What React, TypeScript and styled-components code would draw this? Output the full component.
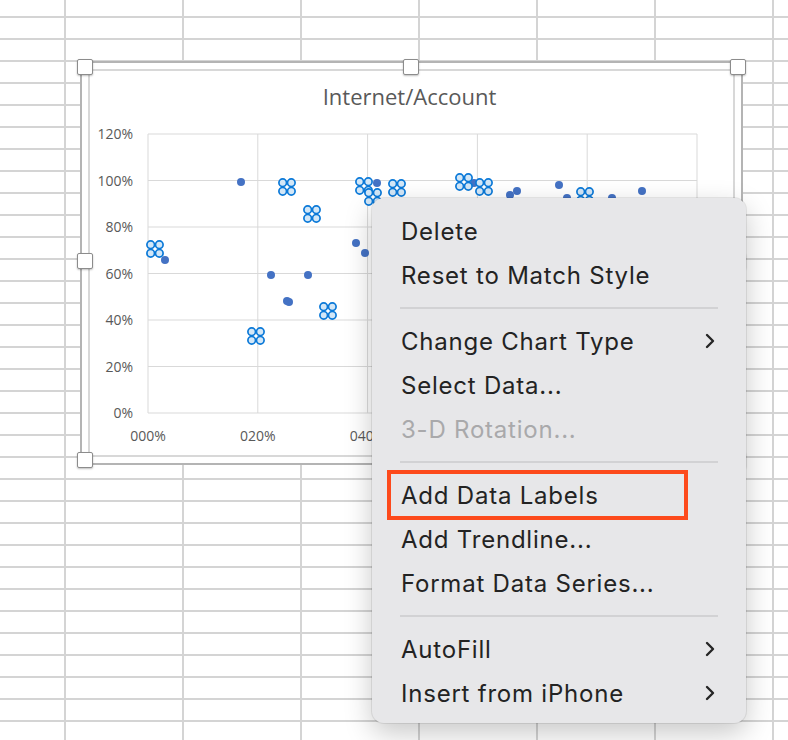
import React from "react";
import styled, { createGlobalStyle, css } from "styled-components";

const GlobalStyle = createGlobalStyle`
  html, body {
    margin: 0;
    padding: 0;
  }
  body {
    background: #ffffff;
    font-family: "Open Sans", "Liberation Sans", sans-serif;
  }
`;

// spreadsheet cells: 118px columns, 22px rows
const Sheet = styled.div`
  position: relative;
  width: 788px;
  height: 740px;
  overflow: hidden;
  background-color: #ffffff;
  background-image:
    linear-gradient(to right, #d4d4d4 2px, transparent 2px),
    linear-gradient(to bottom, #d4d4d4 2px, transparent 2px);
  background-size: 118px 100%, 100% 22px;
  background-position: 64px 0, 0 16px;
`;

const ChartFrame = styled.div`
  position: absolute;
  left: 80px;
  top: 61px;
  width: 663px;
  height: 404px;
  box-sizing: border-box;
  border: 2px solid #b4b4b4;
  padding: 6px;
  background: #ffffff;
`;

const ChartArea = styled.div`
  box-sizing: border-box;
  height: 100%;
  border: 2px solid #d8d8d8;
  display: flex;
  flex-direction: column;
`;

const ChartTitle = styled.div`
  height: 50px;
  display: flex;
  align-items: center;
  justify-content: center;
  font-family: "Open Sans", sans-serif;
  font-size: 22px;
  color: #595959;
  padding-right: 4px;
`;

const Plot = styled.svg`
  display: block;
  flex: 1;
`;

type Edge = "start" | "mid" | "end";

const Handle = styled.div<{ $x: Edge; $y: Edge }>`
  position: absolute;
  width: 14px;
  height: 14px;
  background: #ffffff;
  border: 1px solid #8c8c8c;
  border-radius: 2px;
  box-shadow: 0 1px 2px rgba(0, 0, 0, 0.25);
  ${({ $x }) =>
    $x === "start"
      ? css`left: -5px;`
      : $x === "mid"
      ? css`left: 321px;`
      : css`right: -5px;`}
  ${({ $y }) =>
    $y === "start"
      ? css`top: -4px;`
      : $y === "mid"
      ? css`top: 190px;`
      : css`bottom: -5px;`}
`;

const Menu = styled.div`
  position: absolute;
  left: 372px;
  top: 198px;
  width: 374px;
  box-sizing: border-box;
  padding: 11px 0 8px;
  background: #e7e7e9;
  border-radius: 12px;
  box-shadow: 0 0 0 1px rgba(0, 0, 0, 0.08), 0 10px 28px rgba(0, 0, 0, 0.22);
  font-family: Inter, "Noto Sans", sans-serif;
`;

const MenuItem = styled.div<{ $disabled?: boolean; $marked?: boolean }>`
  position: relative;
  height: 44px;
  display: flex;
  align-items: center;
  justify-content: space-between;
  padding: 0 30px 0 29px;
  font-size: 24px;
  letter-spacing: 0.78px;
  color: ${({ $disabled }) => ($disabled ? "#a9a9ab" : "#232323")};

  ${({ $marked }) =>
    $marked &&
    css`
      &::after {
        content: "";
        position: absolute;
        left: 15px;
        right: 58px;
        top: -3px;
        bottom: -3px;
        border: 4px solid #fd4a1c;
      }
    `}
`;

const Separator = styled.div`
  height: 22px;
  display: flex;
  align-items: center;
  padding: 0 28px;

  &::after {
    content: "";
    flex: 1;
    height: 2px;
    background: #d2d2d4;
  }
`;

const Chevron = () => (
  <svg width="12" height="16" viewBox="0 0 12 16">
    <path
      d="M3 2 L9 8 L3 14"
      fill="none"
      stroke="#262626"
      strokeWidth="2.4"
      strokeLinecap="round"
      strokeLinejoin="round"
    />
  </svg>
);

type Entry =
  | { kind: "item"; label: string; sub?: boolean; disabled?: boolean; marked?: boolean }
  | { kind: "sep" };

const menuEntries: Entry[] = [
  { kind: "item", label: "Delete" },
  { kind: "item", label: "Reset to Match Style" },
  { kind: "sep" },
  { kind: "item", label: "Change Chart Type", sub: true },
  { kind: "item", label: "Select Data..." },
  { kind: "item", label: "3-D Rotation...", disabled: true },
  { kind: "sep" },
  { kind: "item", label: "Add Data Labels", marked: true },
  { kind: "item", label: "Add Trendline..." },
  { kind: "item", label: "Format Data Series..." },
  { kind: "sep" },
  { kind: "item", label: "AutoFill", sub: true },
  { kind: "item", label: "Insert from iPhone", sub: true },
];

// plot geometry, in page pixels
const X0 = 148;
const X_STEP = 109.8;
const Y0 = 414;
const Y_STEP = 46.5;

const yLabels = ["0%", "20%", "40%", "60%", "80%", "100%", "120%"];
// the labels further right sit under the menu
const xLabels = ["000%", "020%", "040%"];

const dots: [number, number][] = [
  [241, 183], [165, 261], [271, 276], [308, 276], [287, 302], [289, 303],
  [356, 244], [365, 254], [377, 184], [474, 184], [517, 192], [510, 196],
  [559, 186], [642, 192], [567, 199], [612, 199],
];

const selected: [number, number][] = [
  [155, 250], [287, 188], [312, 215], [256, 337], [328, 312],
  [364, 187], [373, 198], [397, 189], [464, 183], [484, 188], [585, 197],
];

const SelectedMarker = ({ x, y }: { x: number; y: number }) => (
  <g fill="#d3e7f7" stroke="#0b79d8" strokeWidth="1.7">
    {[
      [-4.3, -4.3],
      [4.3, -4.3],
      [-4.3, 4.3],
      [4.3, 4.3],
    ].map(([dx, dy], i) => (
      <circle key={i} cx={x + dx} cy={y + dy} r="3.8" />
    ))}
  </g>
);

const handles: [Edge, Edge][] = [
  ["start", "start"], ["mid", "start"], ["end", "start"],
  ["start", "mid"], ["end", "mid"],
  ["start", "end"], ["mid", "end"], ["end", "end"],
];

export default function App() {
  return (
    <>
      <GlobalStyle />
      <Sheet>
        <ChartFrame>
          <ChartArea>
            <ChartTitle>Internet/Account</ChartTitle>
            <Plot viewBox="90 123 643 332" width="643" height="332">
              {yLabels.map((_, i) => (
                <line
                  key={"h" + i}
                  x1={X0}
                  x2={X0 + X_STEP * 5}
                  y1={Y0 - Y_STEP * i}
                  y2={Y0 - Y_STEP * i}
                  stroke="#d9d9d9"
                  strokeWidth="1"
                />
              ))}
              {[0, 1, 2, 3, 4, 5].map((i) => (
                <line
                  key={"v" + i}
                  x1={X0 + X_STEP * i}
                  x2={X0 + X_STEP * i}
                  y1={Y0 - Y_STEP * 6}
                  y2={Y0}
                  stroke="#d9d9d9"
                  strokeWidth="1"
                />
              ))}
              <g fontFamily="Open Sans, sans-serif" fontSize="14" fill="#595959">
                {yLabels.map((t, i) => (
                  <text key={t} x={133} y={Y0 - Y_STEP * i + 5} textAnchor="end">
                    {t}
                  </text>
                ))}
                {xLabels.map((t, i) => (
                  <text key={t} x={X0 + X_STEP * i} y={442} textAnchor="middle">
                    {t}
                  </text>
                ))}
              </g>
              {dots.map(([x, y], i) => (
                <circle key={"d" + i} cx={x} cy={y} r="4" fill="#4472c4" />
              ))}
              {selected.map(([x, y], i) => (
                <SelectedMarker key={"s" + i} x={x} y={y} />
              ))}
            </Plot>
          </ChartArea>
          {handles.map(([hx, hy]) => (
            <Handle key={hx + hy} $x={hx} $y={hy} />
          ))}
        </ChartFrame>

        <Menu>
          {menuEntries.map((e, i) =>
            e.kind === "sep" ? (
              <Separator key={i} />
            ) : (
              <MenuItem key={i} $disabled={e.disabled} $marked={e.marked}>
                <span>{e.label}</span>
                {e.sub && <Chevron />}
              </MenuItem>
            )
          )}
        </Menu>
      </Sheet>
    </>
  );
}
